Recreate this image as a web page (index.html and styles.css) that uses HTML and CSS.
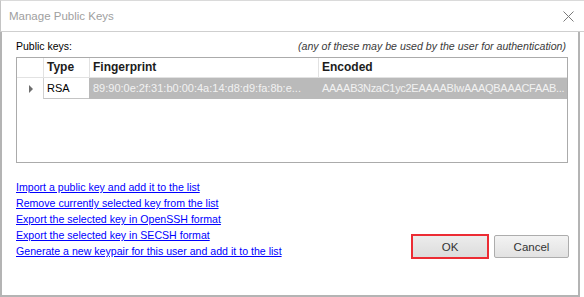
FILE: index.html
```html
<!DOCTYPE html>
<html lang="en">
<head>
    <meta charset="UTF-8">
    <title>Manage Public Keys</title>
    <link rel="stylesheet" href="styles.css">
</head>
<body>
    <div class="dialog">
        <div class="titlebar">
            <span class="title">Manage Public Keys</span>
            <svg class="close" width="11" height="11" viewBox="0 0 11 11">
                <path d="M0.5 0.5 L10.5 10.5 M10.5 0.5 L0.5 10.5" stroke="#7a7a7a" stroke-width="1" fill="none"/>
            </svg>
        </div>
        <div class="client">
            <div class="keys-head">
                <span>Public keys:</span>
                <span class="hint">(any of these may be used by the user for authentication)</span>
            </div>
            <div class="grid">
                <div class="grid-row head">
                    <div class="cell rh"></div>
                    <div class="cell">Type</div>
                    <div class="cell">Fingerprint</div>
                    <div class="cell">Encoded</div>
                </div>
                <div class="grid-row data">
                    <div class="cell rh"><span class="arrow"></span></div>
                    <div class="cell type">RSA</div>
                    <div class="cell sel">89:90:0e:2f:31:b0:00:4a:14:d8:d9:fa:8b:e...</div>
                    <div class="cell sel enc">AAAAB3NzaC1yc2EAAAABIwAAAQBAAACFAAB...</div>
                </div>
            </div>
            <div class="bottom">
                <ul class="links">
                    <li><a href="#">Import a public key and add it to the list</a></li>
                    <li><a href="#">Remove currently selected key from the list</a></li>
                    <li><a href="#">Export the selected key in OpenSSH format</a></li>
                    <li><a href="#">Export the selected key in SECSH format</a></li>
                    <li><a href="#">Generate a new keypair for this user and add it to the list</a></li>
                </ul>
                <div class="buttons">
                    <div class="focus-ring"><button class="btn ok">OK</button></div>
                    <button class="btn">Cancel</button>
                </div>
            </div>
        </div>
    </div>
</body>
</html>
```

FILE: styles.css
```css
*{
    box-sizing: border-box;
    margin:0;
    padding:0;
    list-style-type: none;
}
body{
    background:#fff;
    font-family:"Liberation Sans", Arial, sans-serif;
    font-size:10.5px;
    color:#000;
}
.dialog{
    width:584px;
    height:297px;
    display:flex;
    flex-direction:column;
}
.titlebar{
    height:32px;
    border-top:1px solid #dadada;
    border-left:1px solid #c4c4c4;
    border-bottom:1px solid #cfcfcf;
    display:flex;
    align-items:center;
    justify-content:space-between;
    padding:0 10px 0 8px;
}
.title{
    font-size:11.5px;
    color:#a0a0a0;
}
.close{
    display:block;
}
.client{
    flex:1;
    width:580px;
    border:2px solid #b4b4b4;
    border-top:none;
    padding:6px 10px 0 14px;
}
.keys-head{
    display:flex;
    justify-content:space-between;
    line-height:16px;
    height:19px;
}
.hint{
    font-style:italic;
    font-size:10.6px;
    color:#3a3a3a;
    margin-right:2px;
}
.grid{
    height:106px;
    border:1px solid #ababab;
}
.grid-row{
    display:grid;
    grid-template-columns:26px 46px 229px 1fr;
}
.cell{
    white-space:nowrap;
    overflow:hidden;
}
.head .cell{
    height:20px;
    border-bottom:1px solid #e2e2e2;
    font-weight:bold;
    font-size:12px;
    line-height:19px;
    padding-left:3px;
    color:#1c1c1c;
}
.head .cell + .cell{
    border-left:1px solid #e2e2e2;
}
.data .cell{
    height:21px;
    line-height:20px;
    padding-left:4px;
    font-size:11px;
}
.data .rh{
    display:flex;
    align-items:center;
    padding-left:12px;
}
.arrow{
    width:0;
    height:0;
    border-left:4px solid #6e6e6e;
    border-top:4px solid transparent;
    border-bottom:4px solid transparent;
}
.data .type{
    border-left:1px solid #d0d0d0;
    border-bottom:1px solid #c4c4c4;
    padding-left:3px;
}
.data .sel{
    background:#bababa;
    color:#f2f2f2;
}
.data .enc{
    letter-spacing:-0.3px;
}
.bottom{
    display:flex;
    justify-content:space-between;
    align-items:flex-end;
    margin-top:16px;
}
.links li{
    line-height:16px;
    height:16px;
}
.links a{
    color:#0000ff;
    text-decoration:underline;
    font-size:10.6px;
}
.buttons{
    display:flex;
    align-items:center;
    gap:5px;
    margin-right:-1px;
}
.focus-ring{
    width:78px;
    height:25px;
    border:2px solid #ec2c34;
}
.btn{
    width:75px;
    height:23px;
    border:1px solid #adadad;
    border-radius:2px;
    background:linear-gradient(#f3f3f3, #e2e2e2);
    font-family:"Liberation Sans", Arial, sans-serif;
    font-size:11.5px;
    color:#333;
}
.btn.ok{
    width:100%;
    height:100%;
    border:none;
    border-radius:0;
    background:linear-gradient(#ececec, #dcdcdc);
}
```
